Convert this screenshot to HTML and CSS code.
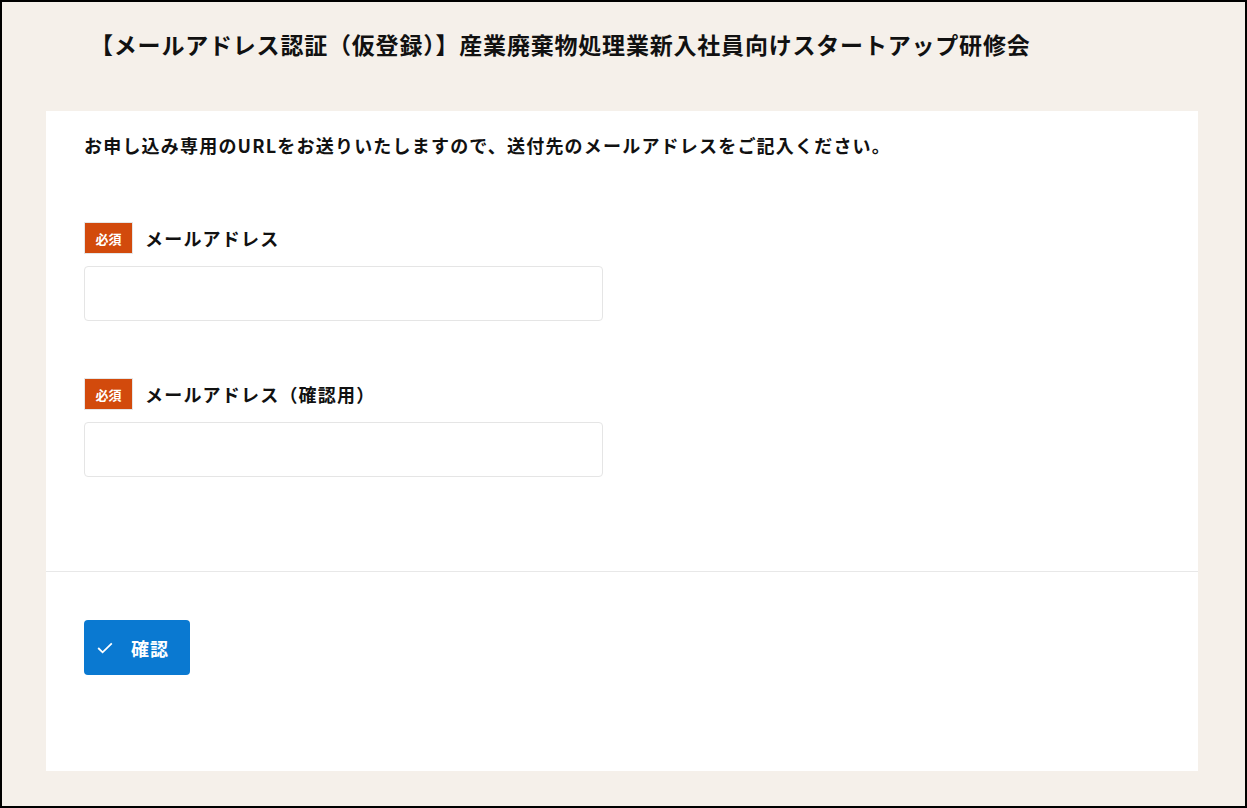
FILE: index.html
```html
<!DOCTYPE html>
<html lang="ja">
<head>
<meta charset="utf-8">
<title>メールアドレス認証</title>
<link rel="stylesheet" href="styles.css">
</head>
<body>
<div class="frame">
  <header class="head">
    <h1 class="title">【メールアドレス認証（仮登録）】産業廃棄物処理業新入社員向けスタートアップ研修会</h1>
  </header>
  <main class="card">
    <div class="body">
      <p class="intro">お申し込み専用のURLをお送りいたしますので、送付先のメールアドレスをご記入ください。</p>
      <div class="field">
        <div class="label"><span class="req">必須</span><span class="label-text">メールアドレス</span></div>
        <input class="input" type="email">
      </div>
      <div class="field">
        <div class="label"><span class="req">必須</span><span class="label-text">メールアドレス（確認用）</span></div>
        <input class="input" type="email">
      </div>
    </div>
    <div class="foot">
      <button class="btn" type="button">
        <svg class="check" width="16" height="12" viewBox="0 0 16 12"><path d="M1.2 6 L5.6 10.3 L14.8 1.3" fill="none" stroke="#fff" stroke-width="1.8"/></svg>
        <span>確認</span>
      </button>
    </div>
  </main>
</div>
</body>
</html>
```
FILE: styles.css
```css
html, body { margin: 0; padding: 0; }
body {
  font-family: "Noto Sans CJK JP", "Noto Sans", sans-serif;
  color: #111;
}
.frame {
  box-sizing: border-box;
  width: 1247px;
  height: 808px;
  border: 2px solid #000;
  background: #f5f0ea;
  padding-left: 44px;
  display: flex;
  flex-direction: column;
}
.head {
  width: 1152px;
  height: 109px;
  box-sizing: border-box;
  padding: 25px 0 0 44px;
}
.title {
  margin: 0;
  font-size: 23px;
  font-weight: 700;
  letter-spacing: 0.8px;
  line-height: 34px;
}
.card {
  width: 1152px;
  height: 660px;
  background: #fff;
  display: flex;
  flex-direction: column;
}
.body {
  padding: 19px 38px 0;
  height: 461px;
  box-sizing: border-box;
  border-bottom: 1px solid #e8e8e8;
}
.intro {
  margin: 0 0 62px;
  font-size: 18px;
  font-weight: 700;
  letter-spacing: 1.2px;
  line-height: 30px;
}
.field { margin-bottom: 57px; }
.label {
  display: flex;
  align-items: center;
  gap: 12px;
  margin-bottom: 12px;
}
.req {
  box-sizing: border-box;
  width: 49px;
  height: 32px;
  flex: none;
  background: #d24a0c;
  border: 1px solid #e6e6e6;
  color: #fff;
  font-size: 13px;
  font-weight: 700;
  display: flex;
  align-items: center;
  justify-content: center;
}
.label-text {
  font-size: 18px;
  font-weight: 700;
  letter-spacing: 1.2px;
}
.input {
  display: block;
  box-sizing: border-box;
  width: 519px;
  height: 55px;
  border: 1px solid #e5e5e5;
  border-radius: 4px;
  background: #fff;
  margin: 0;
}
.foot { padding: 48px 38px 0; }
.btn {
  box-sizing: border-box;
  width: 106px;
  height: 55px;
  border: none;
  border-radius: 4px;
  background: #0a79d1;
  color: #fff;
  display: flex;
  align-items: center;
  padding: 0 0 0 13px;
  gap: 18px;
  font-family: inherit;
  font-size: 18px;
  font-weight: 700;
  letter-spacing: 1px;
}
.check { display: block; }
```
